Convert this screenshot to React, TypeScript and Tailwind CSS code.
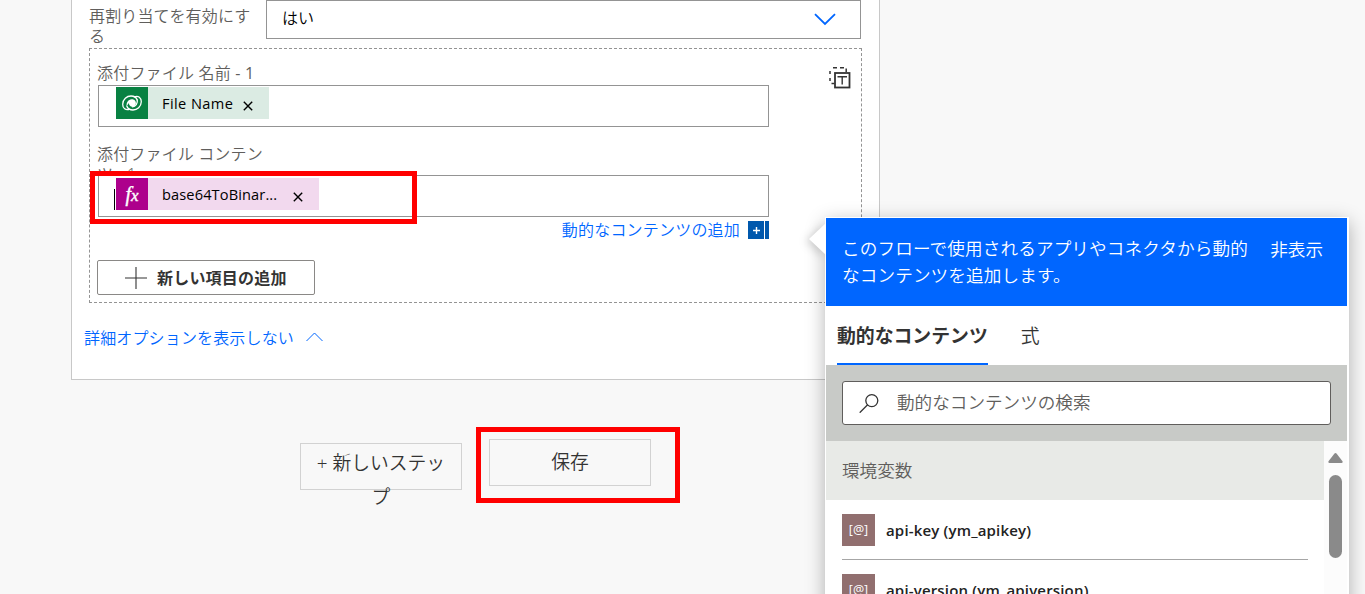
import React, { useState } from 'react';

const FONT = "font-['Open_Sans','Noto_Sans_CJK_JP',sans-serif]";

const VARIABLES = ['api-key (ym_apikey)', 'api-version (ym_apiversion)'];

const DataverseIcon = () => (
  <svg width="22" height="18" viewBox="0 0 22 18" fill="none" stroke="white" strokeWidth="1.3" strokeLinecap="round">
    <path d="M8.8 15.2C4.6 16.8 1.6 14.2 1.7 10.2C1.8 5.4 5.8 2 10 2C13.4 2 15.4 3.6 16.2 6" />
    <path d="M13.2 2.8C17.4 1.2 20.4 3.8 20.3 7.8C20.2 12.6 16.2 16 12 16C8.6 16 6.6 14.4 5.8 12" />
    <path d="M5.8 12C5 8.6 7.4 5.4 10.6 5.2C13.6 5 15.2 7.4 14.9 9.6C14.6 11.8 12.8 13 11 12.8C8.8 12.6 7.6 10.6 8 8.6C8.4 6.6 9.6 5.6 10.6 5.2Z" fill="white" stroke="none" />
    <path d="M16.2 6C17 9.4 14.6 12.6 11.4 12.8" />
  </svg>
);

const CopyTextIcon = () => (
  <svg width="22" height="22" viewBox="0 0 22 22" fill="none" stroke="#333">
    <path d="M1 4V7M1 11V14M4 .8H8M11 .8H15M17.2 1.5V5M2.5 16.5H5.5" strokeWidth="1.5" />
    <rect x="6" y="6" width="14.5" height="14.5" strokeWidth="1.8" />
    <path d="M8.5 9.8H18M13.2 9.8V17.5" strokeWidth="1.4" />
  </svg>
);

const RemoveIcon = () => (
  <svg width="10" height="10" viewBox="0 0 10 10" stroke="#000" strokeWidth="1.4">
    <path d="M.8 .8L9.2 9.2M9.2 .8L.8 9.2" />
  </svg>
);

interface TokenProps {
  label: string;
  kind: 'dataverse' | 'expression';
}

const Token = ({ label, kind }: TokenProps) => {
  const green = kind === 'dataverse';
  return (
    <div className={`flex h-8 items-center ${green ? 'w-[153px] bg-[#dbebe3]' : 'w-[203px] bg-[#f2d9ee]'}`}>
      <div className={`flex size-8 shrink-0 items-center justify-center text-white ${green ? 'bg-[#088142]' : 'bg-[#ad008c]'}`}>
        {green ? (
          <DataverseIcon />
        ) : (
          <span className="font-['Liberation_Serif',serif] text-[20px] leading-none font-normal italic [-webkit-text-stroke:0.4px_white]">
            f<span className="text-[17px]">x</span>
          </span>
        )}
      </div>
      <span className={`mt-[2px] ml-[14px] text-[14.6px] font-normal whitespace-nowrap text-black ${green ? 'w-[71px] tracking-[0.4px]' : 'w-[116px] tracking-[0.12px]'}`}>{label}</span>
      <button className={`mt-[5px] ${green ? 'ml-[10px]' : 'ml-[15px]'}`} aria-label="remove">
        <RemoveIcon />
      </button>
    </div>
  );
};

const ActionCard = () => (
  <div className="ml-[71px] h-[380px] w-[809px] border border-t-0 border-[#c8c8c8] bg-white">
    <div className="ml-[17px] flex h-12 items-start">
      <div className="w-[177px] pt-[6px] pr-[10px] text-[16px] leading-5 tracking-[0.15px] text-[#605e5c]">再割り当てを有効にする</div>
      <div className="flex h-[39px] w-[595px] items-center justify-between border border-[#949494] pr-6 pl-[15px] text-[16px] text-black">
        <span className="pb-1">はい</span>
        <svg width="22" height="13" viewBox="0 0 22 13" fill="none" stroke="#0066ff" strokeWidth="1.8">
          <path d="M1 1.2L11 11L21 1.2" />
        </svg>
      </div>
    </div>

    <div className="ml-[17px] flex h-[255px] w-[773px] justify-between border border-dashed border-[#949494]">
      <div className="flex w-[679px] flex-col pl-[7px] text-[#605e5c]">
        <div className="-ml-px h-9 pt-[14px] pl-px text-[16px] leading-5 tracking-[0.2px]">添付ファイル 名前 <span className="font-normal">- 1</span></div>
        <div className="ml-px h-[42px] border border-[#949494] pt-px pl-[17px]">
          <Token kind="dataverse" label="File Name" />
        </div>
        <div className="mt-[17px] h-[31px] w-[175px] overflow-hidden text-[16px] leading-5 tracking-[0.15px]">添付ファイル コンテンツ - 1</div>
        <div className="ml-px flex h-[42px] border border-[#949494] pt-[2px] pl-[15px]">
          <span className="mt-[11px] mr-px h-[21px] w-px bg-black" />
          <Token kind="expression" label="base64ToBinar..." />
        </div>
        <div className="flex h-[26px] items-center justify-end text-[16px] tracking-[0.2px] text-[#0066ff]">
          動的なコンテンツの追加
          <span className="ml-2 flex h-[18px] w-4 items-center justify-center bg-[#0058ad]">
            <svg width="7" height="7" viewBox="0 0 7 7" stroke="white" strokeWidth="1.4">
              <path d="M3.5 0V7M0 3.5H7" />
            </svg>
          </span>
          <span className="ml-px h-[18px] w-1 bg-[#0058ad]" />
        </div>
        <button className="mt-[17px] flex h-[35px] w-[218px] items-center rounded-[2px] border border-[#8a8886] pl-[27px] text-[16px] font-bold text-[#333]">
          <svg width="22" height="22" viewBox="0 0 22 22" stroke="#333" strokeWidth="1.1">
            <path d="M11 0V22M0 11H22" />
          </svg>
          <span className="ml-[10px] tracking-[0.2px]">新しい項目の追加</span>
        </button>
      </div>
      <div className="pt-[18px] pr-[10px]">
        <CopyTextIcon />
      </div>
    </div>

    <div className="mt-[23px] ml-3 flex items-center text-[16px] leading-6 tracking-[0.15px] text-[#0066ff]">
      詳細オプションを表示しない
      <svg className="mb-[2px] ml-3" width="17" height="10" viewBox="0 0 17 10" fill="none" stroke="#0066ff" strokeWidth="1">
        <path d="M.5 9L8.5 1L16.5 9" />
      </svg>
    </div>
  </div>
);

const ContentPicker = () => {
  const [query, setQuery] = useState('');

  return (
    <div className="absolute top-[217px] left-[825px] h-[400px] w-[524px] bg-white shadow-[0_5px_18px_rgba(0,0,0,0.3)]">
      {/* callout beak */}
      <svg className="absolute top-[6px] left-[-16px] drop-shadow-[-3px_2px_4px_rgba(0,0,0,0.18)]" width="17" height="32" viewBox="0 0 17 32">
        <path d="M17 0L0 16L17 32Z" fill="white" />
      </svg>
      <div className="relative mt-px ml-px flex h-[397px] w-[521px] flex-col">
        <div className="flex h-[88px] shrink-0 justify-between bg-[#0066ff] pt-[17px] pr-6 pl-4 text-[17.6px] leading-[27px] text-white">
          <p className="w-[412px] tracking-[0.13px]">このフローで使用されるアプリやコネクタから動的なコンテンツを追加します。</p>
          <button className="h-[29px] shrink-0">非表示</button>
        </div>
        <div className="flex h-[59px] shrink-0 gap-[33px] pl-[11px] text-[18.85px] text-[#333]">
          <button className="h-[59px] border-b-2 border-[#0066ff] pt-[3px] font-bold whitespace-nowrap">動的なコンテンツ</button>
          <button className="h-[59px] border-b-2 border-transparent pt-[3px]">式</button>
        </div>
        <div className="h-[76px] shrink-0 bg-[#c8cac7] px-4 pt-4">
          <div className="flex h-11 items-center rounded-[3px] border border-[#605e5c] bg-white pl-4">
            <svg width="20" height="20" viewBox="0 0 20 20" fill="none" stroke="#333" strokeWidth="1.3">
              <circle cx="12.8" cy="7.6" r="6" />
              <path d="M8.6 11.8L.7 19.7" />
            </svg>
            <input
              value={query}
              onChange={(e) => setQuery(e.target.value)}
              placeholder="動的なコンテンツの検索"
              className="mb-[2px] ml-[18px] w-[400px] text-[17.6px] outline-none placeholder:text-[#605e5c]"
            />
          </div>
        </div>
        <div className="flex min-h-0 flex-1 overflow-hidden">
          <div className="w-[498px]">
            <div className="flex h-[59px] items-center bg-[#e8eae7] pb-px pl-4 text-[17.6px] text-[#605e5c]">環境変数</div>
            {VARIABLES.map((name) => (
              <div key={name} className="mx-4 flex h-[60px] items-center border-b border-[#a6a6a6]">
                <span className="flex h-8 w-[33px] items-center justify-center bg-[#916f6f] pt-px text-[12.5px] font-normal text-white">[@]</span>
                <span className="mt-[2px] ml-[11px] text-[15px] font-semibold tracking-[0.17px] text-[#222]">{name}</span>
              </div>
            ))}
          </div>
          <div className="flex w-[23px] flex-col items-center bg-[#fcfcfc] pt-3">
            <svg width="15" height="10" viewBox="0 0 15 10" fill="#8a8a8a">
              <path d="M6.3 .7Q7.5-.5 8.7 .7L14.5 8.2Q15 10 13.6 10H1.4Q0 10 .5 8.2Z" />
            </svg>
            <div className="mt-3 h-[83px] w-[13px] rounded-full bg-[#8a8a8a]" />
          </div>
        </div>
      </div>
    </div>
  );
};

export default function App() {
  return (
    <div className={`relative h-[594px] w-[1365px] overflow-hidden bg-[#f8f8f8] font-[350] ${FONT}`}>
      <ActionCard />
      <div className="mt-[59px] ml-[300px] flex items-start gap-[27px] text-[18.8px] text-[#333]">
        <button className="mt-1 h-[47px] w-[162px] border border-[#d2d2d2] px-3 leading-[34px]">
          <span className="-mt-px block h-10">+ 新しいステップ</span>
        </button>
        <button className="h-[47px] w-[162px] border border-[#d2d2d2]">保存</button>
      </div>

      {/* highlights */}
      <div className="absolute top-[171px] left-[90px] h-[53px] w-[327px] border-5 border-[#ff0000]" />
      <div className="absolute top-[427px] left-[476px] h-[76px] w-[204px] border-5 border-[#ff0000]" />
      <ContentPicker />
    </div>
  );
}
